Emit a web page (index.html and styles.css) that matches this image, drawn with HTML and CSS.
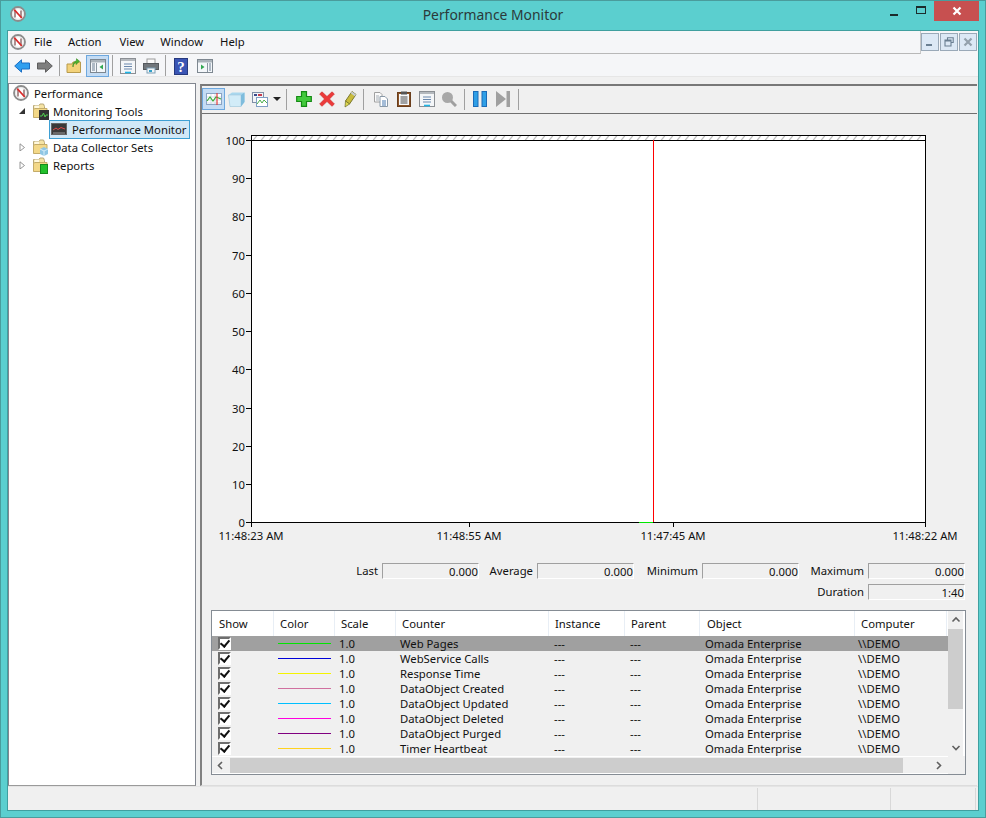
FILE: index.html
```html
<!DOCTYPE html>
<html lang="en">
<head>
<meta charset="utf-8">
<title>Performance Monitor</title>
<link rel="stylesheet" href="styles.css">
</head>
<body>
<svg class="defs" width="0" height="0" aria-hidden="true">
  <defs>
    <symbol id="logo" viewBox="0 0 16 16">
      <circle cx="8" cy="8" r="7" fill="#fff" stroke="#8c8c8c" stroke-width="1.8"/>
      <circle cx="8" cy="8" r="5.4" fill="#fff" stroke="#dcdcdc" stroke-width=".8"/>
      <path d="M5 11.5V4.8M11 11.5V4.5" fill="none" stroke="#6a3a3a" stroke-width="1.1"/>
      <path d="M4.2 3.6L11.8 12" stroke="#d92b2b" stroke-width="1.7"/>
    </symbol>
    <symbol id="folder" viewBox="0 0 16 16">
      <path d="M1.5 2.5H7L8 1H11.5L12.5 3.5V14H1.5Z" fill="#f5e3a4" stroke="#b8a878"/>
      <path d="M3 5.5H15V14.5H1.5V6.5Z" fill="#f3d888" stroke="#c4ac6a"/>
      <path d="M2.5 2.5H7V5H2.5Z" fill="#fff8df"/>
    </symbol>
    <symbol id="win" viewBox="0 0 16 16">
      <rect x=".5" y="1.5" width="15" height="13" fill="#f4f7fa" stroke="#7d8790"/>
      <rect x="1" y="2" width="14" height="2.5" fill="#aab3ba"/>
    </symbol>
    <symbol id="chart" viewBox="0 0 16 16">
      <rect x=".5" y="2.5" width="15" height="11" fill="#fff" stroke="#8aa4c4"/>
      <path d="M1 6H15M1 9H15M1 12H15M5 3V13M9 3V13" stroke="#c6d3e2" stroke-width=".7"/>
      <path d="M1 10L4 6L7 10L10 6L15 8" fill="none" stroke="#3aae3a" stroke-width="1.2"/>
    </symbol>
  </defs>
</svg>
<div class="window">
  <header class="titlebar">
    <div class="title-left"><svg class="ico"><use href="#logo"/></svg></div>
    <div class="title">Performance Monitor</div>
    <div class="caption">
      <span class="cap"><i class="cap-min"></i></span>
      <span class="cap"><i class="cap-max"></i></span>
      <span class="cap cap-close"><svg width="10" height="10" viewBox="0 0 10 10"><path d="M1.5 1.5L8.5 8.5M8.5 1.5L1.5 8.5" stroke="#fff" stroke-width="2.2"/></svg></span>
    </div>
  </header>
  <div class="content">
    <nav class="menubar">
      <div class="menus">
        <svg class="ico menu-logo"><use href="#logo"/></svg>
        <span class="menu m-file">File</span>
        <span class="menu m-action">Action</span>
        <span class="menu m-view">View</span>
        <span class="menu m-window">Window</span>
        <span class="menu">Help</span>
      </div>
      <div class="mdi">
        <span class="mdi-btn"><svg width="10" height="10" viewBox="0 0 10 10"><path d="M1 8H7" stroke="#6b7f92" stroke-width="2"/></svg></span>
        <span class="mdi-btn"><svg width="10" height="10" viewBox="0 0 10 10"><path d="M3.5 2.5V.8H9.2V5.5H7.5M1 3H7V9H1ZM1 4H7" fill="none" stroke="#6b7f92" stroke-width="1.1"/></svg></span>
        <span class="mdi-btn"><svg width="10" height="10" viewBox="0 0 10 10"><path d="M1.5 1.5L8.5 8.5M8.5 1.5L1.5 8.5" stroke="#93a0ac" stroke-width="2.2"/></svg></span>
      </div>
    </nav>
    <div class="toolbar">
      <span class="tb"><svg width="16" height="16" viewBox="0 0 16 16"><path d="M.7 8L7.5 1.8V5H15.5V11H7.5V14.2Z" fill="#2f9ff0" stroke="#1c6fc4"/></svg></span>
      <span class="tb"><svg width="16" height="16" viewBox="0 0 16 16"><path d="M15.3 8L8.5 1.8V5H.5V11H8.5V14.2Z" fill="#7e7e7e" stroke="#5e5e5e"/></svg></span>
      <span class="sep"></span>
      <span class="tb tb-up"><svg width="16" height="16" viewBox="0 0 16 16"><path d="M1 6H6L7 4H14.5V14.5H1Z" fill="#f3d27a" stroke="#b89b4d"/><path d="M7 9C7 6 9 5 10 4.5V6.5L13.5 3.2L10.5 .7V2.7C7.5 3.5 6.5 6 7 9Z" fill="#4fb52f" stroke="#2f8a1c" stroke-width=".6"/></svg></span>
      <span class="tb on"><svg width="16" height="16" viewBox="0 0 16 16"><use href="#win"/><path d="M2 6H5M2 8H5M2 10H5M2 12H5" stroke="#6b7f92"/><path d="M6.5 5V14" stroke="#8b97a2"/><path d="M13 6.5V11.5L9.5 9Z" fill="#32a852"/></svg></span>
      <span class="sep"></span>
      <span class="tb"><svg width="16" height="16" viewBox="0 0 16 16"><rect x=".5" y=".5" width="15" height="15" fill="#f4f6f8" stroke="#8b8f94"/><rect x="1" y="1" width="14" height="2" fill="#b4b9be"/><path d="M4 6H12M4 8.5H12M4 11H12" stroke="#6a88ad"/><path d="M5 14.5H11" stroke="#1eb6e6" stroke-width="1.6"/></svg></span>
      <span class="tb"><svg width="16" height="16" viewBox="0 0 16 16"><rect x="4" y="1" width="8" height="5" fill="#fbfbfb" stroke="#9a9a9a"/><rect x=".5" y="5.5" width="15" height="6" fill="#71767b" stroke="#55595d"/><rect x="4" y="10" width="8" height="5" fill="#f2f5f7" stroke="#7f9fb5"/><rect x="6" y="12" width="3" height="2" fill="#32a0c8"/></svg></span>
      <span class="sep"></span>
      <span class="tb"><svg width="14" height="17" viewBox="0 0 14 17"><rect x=".5" y=".5" width="13" height="16" fill="#3a55b4" stroke="#26397e"/><text x="7" y="14" text-anchor="middle" class="help-q">?</text></svg></span>
      <span class="tb tb-act"><svg width="16" height="16" viewBox="0 0 16 16"><use href="#win"/><path d="M10.5 5V14" stroke="#8b97a2"/><path d="M12 6H14M12 8H14M12 10H14M12 12H14" stroke="#6b7f92"/><path d="M4 6.5V11.5L7.5 9Z" fill="#32a852"/></svg></span>
    </div>
    <div class="split">
      <aside class="tree">
        <div class="node"><svg class="ico"><use href="#logo"/></svg><span class="lbl-root">Performance</span></div>
        <div class="node lvl1"><svg class="arrow" viewBox="0 0 8 8"><path d="M7 1V7H1Z" fill="#333"/></svg>
          <span class="fold"><svg class="ico"><use href="#folder"/></svg><svg class="badge" viewBox="0 0 10 10"><rect width="10" height="10" fill="#333"/><path d="M1 6H3L4.5 3L6 7L7 5H9" fill="none" stroke="#4fd04f"/></svg></span><span>Monitoring Tools</span></div>
        <div class="node lvl2"><span class="sel"><svg class="ico" viewBox="0 0 16 16"><rect x=".5" y="2.5" width="15" height="11" fill="#3a3a3a" stroke="#666"/><path d="M2 9L5 7L7 8.5L10 6.5L14 8" fill="none" stroke="#e04a4a"/><path d="M2 12H14" stroke="#999"/></svg><span>Performance Monitor</span></span></div>
        <div class="node lvl1"><svg class="arrow" viewBox="0 0 8 8"><path d="M2 .8L6.5 4.5L2 8Z" fill="#fff" stroke="#8a8a8a" stroke-width=".9"/></svg>
          <span class="fold"><svg class="ico"><use href="#folder"/></svg><svg class="badge" viewBox="0 0 10 10"><path d="M1 3L5 1L9 3V8L5 10L1 8Z" fill="#8fc6e4"/><path d="M1 3L5 5L9 3M5 5V10" fill="none" stroke="#d4ecf8"/></svg></span><span>Data Collector Sets</span></div>
        <div class="node lvl1"><svg class="arrow" viewBox="0 0 8 8"><path d="M2 .8L6.5 4.5L2 8Z" fill="#fff" stroke="#8a8a8a" stroke-width=".9"/></svg>
          <span class="fold"><svg class="ico"><use href="#folder"/></svg><svg class="badge" viewBox="0 0 10 10"><rect x="1.5" y=".5" width="7" height="9" fill="#22c02c" stroke="#158a1c"/></svg></span><span>Reports</span></div>
      </aside>
      <main class="pane">
        <div class="pane-tools">
          <span class="tb on"><svg width="18" height="16" viewBox="0 0 18 16"><use href="#chart" width="18" height="16"/><path d="M12 2V14" stroke="#e23c3c" stroke-width="1.2"/></svg></span>
          <span class="tb"><svg width="17" height="15" viewBox="0 0 17 15"><path d="M.5 3L4 .5H16.5V10L13 14.5H2Z" fill="#a9d7ee"/><path d="M.5 3H13V14.5H2Z" fill="#d2ecf8" stroke="#a5c8da" stroke-width=".6"/><path d="M13 3L16.5 .5V10L13 14.5Z" fill="#7fbcdc"/></svg></span>
          <span class="tb"><svg width="16" height="15" viewBox="0 0 16 15"><rect x=".5" y=".5" width="11" height="10" fill="#f2f4f7" stroke="#7f8fa6"/><rect x="2" y="2" width="3" height="2" fill="#3a4a8a"/><rect x="6" y="2" width="4" height="2" fill="#c83a4a"/><rect x="4.5" y="5.5" width="11" height="9" fill="#fff" stroke="#7f9fc4"/><path d="M5 12L8 8L10 11L12 8L15 11" fill="none" stroke="#4aae4a"/></svg></span>
          <span class="tb-drop"><i></i></span>
          <span class="sep sep-a"></span>
          <span class="tb"><svg width="16" height="16" viewBox="0 0 16 16"><path d="M5.5 .7H10.5V5.5H15.3V10.5H10.5V15.3H5.5V10.5H.7V5.5H5.5Z" fill="#42c93c" stroke="#158a14" stroke-width="1.2"/></svg></span>
          <span class="tb"><svg width="16" height="16" viewBox="0 0 16 16"><path d="M3 .8L8 5.5L13 .8L15.4 3L10.5 8L15.4 13L13 15.3L8 10.5L3 15.3L.6 13L5.5 8L.6 3Z" fill="#ec3a3a" stroke="#c92a2a" stroke-width=".6"/></svg></span>
          <span class="tb"><svg width="16" height="18" viewBox="0 0 16 18"><path d="M10 1.5L14 4.5L7.5 14L3.5 11Z" fill="#c8bb3a" stroke="#7d7a30"/><path d="M10 1.5L14 4.5L12.8 6.3L8.7 3.3Z" fill="#c6cdd2"/><path d="M3.5 11L7.5 14L3 17Z" fill="#e0da50" stroke="#6b6b2c" stroke-width=".7"/></svg></span>
          <span class="sep sep-b"></span>
          <span class="tb"><svg width="14" height="15" viewBox="0 0 14 15"><path d="M.5 .5H6L8 2.5V10H.5Z" fill="#fafafa" stroke="#a0a0a0"/><path d="M6 4.5H11L13.5 7V14.5H6Z" fill="#fff" stroke="#8a9aa8"/><path d="M2 4H5M2 6H5M2 8H5" stroke="#a5adb5"/><path d="M8 9H12M8 11H12M8 13H12" stroke="#4a7ab0"/></svg></span>
          <span class="tb"><svg width="14" height="16" viewBox="0 0 14 16"><rect x=".5" y="1.5" width="13" height="14" fill="#8a5428" stroke="#6a3e1c"/><rect x="2" y="3" width="10" height="11" fill="#f6f8fa"/><rect x="4" y=".5" width="6" height="3" fill="#555"/><path d="M3.5 6H10.5M3.5 8H10.5M3.5 10H10.5M3.5 12H10.5" stroke="#4a4a4a"/></svg></span>
          <span class="tb"><svg width="16" height="16" viewBox="0 0 16 16"><rect x=".5" y=".5" width="15" height="15" fill="#f4f6f8" stroke="#8b8f94"/><rect x="1" y="1" width="14" height="2" fill="#b4b9be"/><path d="M4 6H12M4 8.5H12M4 11H12" stroke="#6a88ad"/><path d="M5 14.5H11" stroke="#1eb6e6" stroke-width="1.6"/></svg></span>
          <span class="tb tb-narrow"><svg width="16" height="16" viewBox="0 0 16 16"><circle cx="6.5" cy="6.5" r="5.5" fill="#a8a8a8"/><path d="M10 10L15 15" stroke="#a0a0a0" stroke-width="3"/></svg></span>
          <span class="sep sep-c"></span>
          <span class="tb"><svg width="14" height="16" viewBox="0 0 14 16"><rect x=".5" y=".5" width="4.5" height="15" fill="#2f9fe6" stroke="#1c6cb8"/><rect x="9" y=".5" width="4.5" height="15" fill="#2f9fe6" stroke="#1c6cb8"/></svg></span>
          <span class="tb"><svg width="14" height="16" viewBox="0 0 14 16"><path d="M0 0L10 8L0 16Z" fill="#a0a0a0"/><rect x="10.5" width="3.5" height="16" fill="#a0a0a0"/></svg></span>
          <span class="sep sep-d"></span>
        </div>
        <svg class="chart" width="775" height="441" viewBox="202 114 775 441" role="img" aria-label="Performance graph">
          <defs>
            <pattern id="hatch" width="8" height="5" patternUnits="userSpaceOnUse" x="251" y="135.5">
              <rect width="8" height="5" fill="#fff"/>
              <path d="M2 5L6 0" stroke="#777" stroke-width=".8"/>
            </pattern>
          </defs>
          <rect x="251.5" y="135.5" width="674" height="5" fill="url(#hatch)" stroke="#000"/>
          <rect x="251.5" y="140.5" width="674" height="382" fill="#fff" stroke="#000"/>
          <path d="M653.5 140V522" stroke="#f00"/>
          <path d="M639 522.5H653" stroke="#00e600"/>
          <path class="tick" d="M246 140.5H251M246 178.5H251M246 216.5H251M246 255.5H251M246 293.5H251M246 331.5H251M246 369.5H251M246 408.5H251M246 446.5H251M246 484.5H251M246 522.5H251M251.5 522V527M469.5 522V527M673.5 522V527M925.5 522V527"/>
          <g class="ylab">
            <text x="245" y="145">100</text><text x="245" y="183">90</text><text x="245" y="221">80</text><text x="245" y="260">70</text><text x="245" y="298">60</text><text x="245" y="336">50</text><text x="245" y="374">40</text><text x="245" y="413">30</text><text x="245" y="451">20</text><text x="245" y="489">10</text><text x="245" y="527">0</text>
          </g>
          <g class="xlab">
            <text x="251" y="540">11:48:23 AM</text><text x="469" y="540">11:48:55 AM</text><text x="673" y="540">11:47:45 AM</text><text x="925" y="540">11:48:22 AM</text>
          </g>
        </svg>
        <section class="stats">
          <span class="s-lab">Last</span><span class="s-val">0.000</span>
          <span class="s-lab">Average</span><span class="s-val">0.000</span>
          <span class="s-lab">Minimum</span><span class="s-val">0.000</span>
          <span class="s-lab">Maximum</span><span class="s-val">0.000</span>
          <span class="s-lab s-dur">Duration</span><span class="s-val">1:40</span>
        </section>
        <section class="counters">
          <div class="cols">
            <div class="row head"><span>Show</span><span>Color</span><span>Scale</span><span>Counter</span><span>Instance</span><span>Parent</span><span>Object</span><span>Computer</span></div>
            <div class="row sel-row"><span class="cell-chk"><i class="chk"></i></span><span class="cell-c"><i class="ln c1"></i></span><span>1.0</span><span>Web Pages</span><span>---</span><span>---</span><span>Omada Enterprise</span><span>\\DEMO</span></div>
            <div class="row"><span class="cell-chk"><i class="chk"></i></span><span class="cell-c"><i class="ln c2"></i></span><span>1.0</span><span>WebService Calls</span><span>---</span><span>---</span><span>Omada Enterprise</span><span>\\DEMO</span></div>
            <div class="row"><span class="cell-chk"><i class="chk"></i></span><span class="cell-c"><i class="ln c3"></i></span><span>1.0</span><span>Response Time</span><span>---</span><span>---</span><span>Omada Enterprise</span><span>\\DEMO</span></div>
            <div class="row"><span class="cell-chk"><i class="chk"></i></span><span class="cell-c"><i class="ln c4"></i></span><span>1.0</span><span>DataObject Created</span><span>---</span><span>---</span><span>Omada Enterprise</span><span>\\DEMO</span></div>
            <div class="row"><span class="cell-chk"><i class="chk"></i></span><span class="cell-c"><i class="ln c5"></i></span><span>1.0</span><span>DataObject Updated</span><span>---</span><span>---</span><span>Omada Enterprise</span><span>\\DEMO</span></div>
            <div class="row"><span class="cell-chk"><i class="chk"></i></span><span class="cell-c"><i class="ln c6"></i></span><span>1.0</span><span>DataObject Deleted</span><span>---</span><span>---</span><span>Omada Enterprise</span><span>\\DEMO</span></div>
            <div class="row"><span class="cell-chk"><i class="chk"></i></span><span class="cell-c"><i class="ln c7"></i></span><span>1.0</span><span>DataObject Purged</span><span>---</span><span>---</span><span>Omada Enterprise</span><span>\\DEMO</span></div>
            <div class="row"><span class="cell-chk"><i class="chk"></i></span><span class="cell-c"><i class="ln c8"></i></span><span>1.0</span><span>Timer Heartbeat</span><span>---</span><span>---</span><span>Omada Enterprise</span><span>\\DEMO</span></div>
          </div>
          <div class="vscroll">
            <svg width="10" height="17" viewBox="0 0 10 17"><path d="M1.5 10.5L5 7L8.5 10.5" fill="none" stroke="#606060" stroke-width="1.6"/></svg>
            <i class="thumb-v"></i>
            <svg class="down" width="10" height="17" viewBox="0 0 10 17"><path d="M1.5 7L5 10.5L8.5 7" fill="none" stroke="#606060" stroke-width="1.6"/></svg>
          </div>
          <div class="hscroll">
            <svg width="17" height="15" viewBox="0 0 17 15"><path d="M10 4L6.5 7.5L10 11" fill="none" stroke="#606060" stroke-width="1.6"/></svg>
            <i class="thumb-h"></i>
            <svg class="right" width="17" height="15" viewBox="0 0 17 15"><path d="M7 4L10.5 7.5L7 11" fill="none" stroke="#606060" stroke-width="1.6"/></svg>
          </div>
          <div class="corner"></div>
        </section>
      </main>
    </div>
    <footer class="status"><span class="st1"></span><span class="st2"></span><span class="st3"></span></footer>
  </div>
</div>
</body>
</html>
```
FILE: styles.css
```css
* { box-sizing: border-box; }
html, body { margin: 0; padding: 0; }
body { width: 986px; height: 818px; overflow: hidden; font-family: "Noto Sans", "Open Sans", sans-serif; font-size: 11.3px; color: #111; }
.defs { position: absolute; }
i { display: block; }
.ico { width: 16px; height: 16px; flex: none; display: block; }

.window { width: 986px; height: 818px; background: #5bcfcf; border: 1px solid #4a9c9c; display: flex; flex-direction: column; }
.titlebar { height: 29px; display: grid; grid-template-columns: 1fr auto 1fr; align-items: start; }
.title-left { padding: 5px 0 0 9px; }
.title { font-size: 13.9px; line-height: 28px; color: #2b3a3a; }
.caption { display: flex; justify-content: flex-end; padding-right: 6px; }
.cap { width: 27px; height: 20px; display: flex; align-items: center; justify-content: center; }
.cap-close { width: 45px; background: #c75050; }
.cap-min { width: 8px; height: 2px; background: #1c2c2c; margin-top: 7px; }
.cap-max { width: 10px; height: 8px; border: 1px solid #1c2c2c; border-top-width: 2px; margin-top: -2px; }

.content { flex: 1; margin: 0 6px 6px; border: 1px solid #3f9f9f; background: #f0f0f0; display: flex; flex-direction: column; }

.menubar { height: 23px; background: #f5f6f8; display: flex; justify-content: space-between; }
.menus { flex: 1; display: flex; align-items: center; padding: 0 0 0 2px; border-bottom: 1px solid #b8b8b8; border-right: 1px solid #c8c8c8; }
.menu-logo { margin-right: 8px; }
.menu { line-height: 22px; }
.m-file { margin-right: 16px; }
.m-action { margin-right: 18px; }
.m-view { margin-right: 16px; }
.m-window { margin-right: 17px; }
.mdi { display: flex; gap: 1px; padding: 2px 1px 0 0; }
.mdi-btn { width: 18px; height: 18px; background: #dce8f5; border: 1px solid #9aa9b8; display: flex; align-items: center; justify-content: center; }

.toolbar { height: 23px; background: #f5f6f8; border-bottom: 1px solid #e6e6e6; display: flex; align-items: flex-start; padding: 1px 0 0 2px; }
.tb { width: 23px; height: 22px; display: flex; align-items: center; justify-content: center; flex: none; border: 1px solid transparent; }
.tb.on { background: #c4dcf4; border-color: #6ea8de; }
.sep { width: 1px; height: 21px; background: #a0a0a0; margin: 0 3px; flex: none; }
.tb-up { margin-left: -1px; }
.tb-up + .tb { margin-left: 1px; }
.tb-act { margin-left: 1px; }
.help-q { font: bold 15px "Liberation Serif", serif; fill: #fff; }

.split { flex: 1; display: flex; margin-top: 6px; min-height: 0; }
.tree { width: 188px; background: #fff; border: 1px solid #828790; border-bottom-color: #9a9a9a; flex: none; }
.node { height: 18px; display: flex; align-items: center; padding-left: 4px; }
.lbl-root { margin-left: 5px; }
.lvl1 { padding-left: 9px; }
.arrow { width: 8px; height: 8px; margin-right: 6px; flex: none; }
.fold { position: relative; width: 21px; flex: none; }
.badge { position: absolute; width: 10px; height: 10px; left: 7px; top: 7px; }
.lvl2 { padding-left: 40px; }
.sel { height: 19px; width: 141px; background: #d1e8f7; border: 1px solid #3d9fd3; display: flex; align-items: center; gap: 5px; padding-left: 1px; white-space: nowrap; }

.pane { width: 777px; margin-left: 4px; border-top: 2px solid #787878; border-left: 2px solid #808080; border-bottom: 1px solid #dcdcdc; display: flex; flex-direction: column; background: #f0f0f0; margin-top: 1px; }
.pane-tools { height: 28px; border-bottom: 1px solid #707070; display: flex; align-items: center; padding: 0 0 1px 0; }
.tb-drop { width: 12px; display: flex; justify-content: center; flex: none; }
.tb-drop i { width: 0; height: 0; border: 4px solid transparent; border-top: 4px solid #222; border-bottom: 0; }
.sep-a { margin: 0 5px 0 3px; }
.sep-b { margin: 0 5.5px 0 2px; }
.sep-c { margin: 0 4px 0 3px; }
.sep-d { margin: 0 0 0 3px; }
.tb-narrow { margin-left: -1px; }

.chart { display: block; flex: none; }
.chart text { font-size: 11.3px; fill: #111; }
.tick { stroke: #000; fill: none; }
.ylab text { text-anchor: end; }
.xlab text { text-anchor: middle; }

.stats { margin-top: 8px; padding-right: 12px; display: grid; grid-template-columns: 1fr 97px 50px 97px 60px 97px 61px 97px; column-gap: 4px; row-gap: 5px; }
.s-lab { text-align: right; line-height: 16px; white-space: nowrap; }
.s-val { height: 16px; line-height: 15px; text-align: right; padding-right: 0; border: 1px solid; border-color: #a0a0a0 #fff #fff #a0a0a0; }
.s-dur { grid-column: 7; }

.counters { margin: 10px 11px 0 9px; height: 165px; border: 1px solid #858c94; display: grid; grid-template-columns: 736px 1fr; grid-template-rows: 145px 1fr; background: #fff; flex: none; }
.cols { min-width: 0; }
.row { display: grid; grid-template-columns: 62px 61px 61px 153px 76px 75px 155px 92px; height: 15px; line-height: 15px; background: #f0f0f0; white-space: nowrap; }
.row span { padding-left: 5px; }
.row > span:nth-child(3), .row > span:nth-child(4) { padding-left: 4px; }
.row > span:nth-child(8) { padding-left: 3px; }
.row .cell-chk, .row .cell-c { padding: 0; }
.head { height: 25px; line-height: 25px; background: #fff; }
.head span { border-right: 1px solid #e8eef5; }
.head > span:nth-child(n) { padding-left: 6px; }
.head > span:first-child, .head > span:nth-child(7) { padding-left: 7px; }
.sel-row { background: #a0a0a0; }
.cell-chk { display: block; padding-left: 5px !important; }
.chk { width: 13px; height: 13px; margin: 1px 0 0 1px; background: #fff; border: 2px solid; border-color: #6e6e6e #fff #fff #6e6e6e; position: relative; }
.chk::after { content: ""; position: absolute; left: 2px; top: -1px; width: 4px; height: 7px; border: solid #111; border-width: 0 2px 2px 0; transform: rotate(40deg); }
.cell-c { display: flex; align-items: center; padding-left: 4px !important; }
.ln { width: 53px; height: 1px; }
.c1 { background: #00e600; }
.c2 { background: #0000d8; }
.c3 { background: #f4f400; }
.c4 { background: #d070a0; }
.c5 { background: #00bfff; }
.c6 { background: #ff00e0; }
.c7 { background: #800080; }
.c8 { background: #ffd21e; }

.vscroll { background: #f0f0f0; display: flex; flex-direction: column; align-items: center; width: 15px; }
.vscroll svg { flex: none; }
.thumb-v { width: 15px; height: 80px; background: #cdcdcd; margin-top: 1px; }
.vscroll .down { margin-top: auto; }
.hscroll { background: #f0f0f0; display: flex; align-items: center; height: 17px; margin-top: 0; border-top: 1px solid #fff; }
.hscroll svg { flex: none; }
.thumb-h { width: 673px; height: 15px; background: #cdcdcd; margin-left: 1px; }
.hscroll .right { margin-left: auto; margin-right: 1px; }
.corner { background: #f0f0f0; }

.status { height: 24px; flex: none; display: grid; grid-template-columns: 750px 133px 85px 2px; background: #f0f0f0; padding-top: 1px; border-top: 1px solid #e4e4e4; }
.status span { border-right: 1px solid #d8d8d8; }
```
